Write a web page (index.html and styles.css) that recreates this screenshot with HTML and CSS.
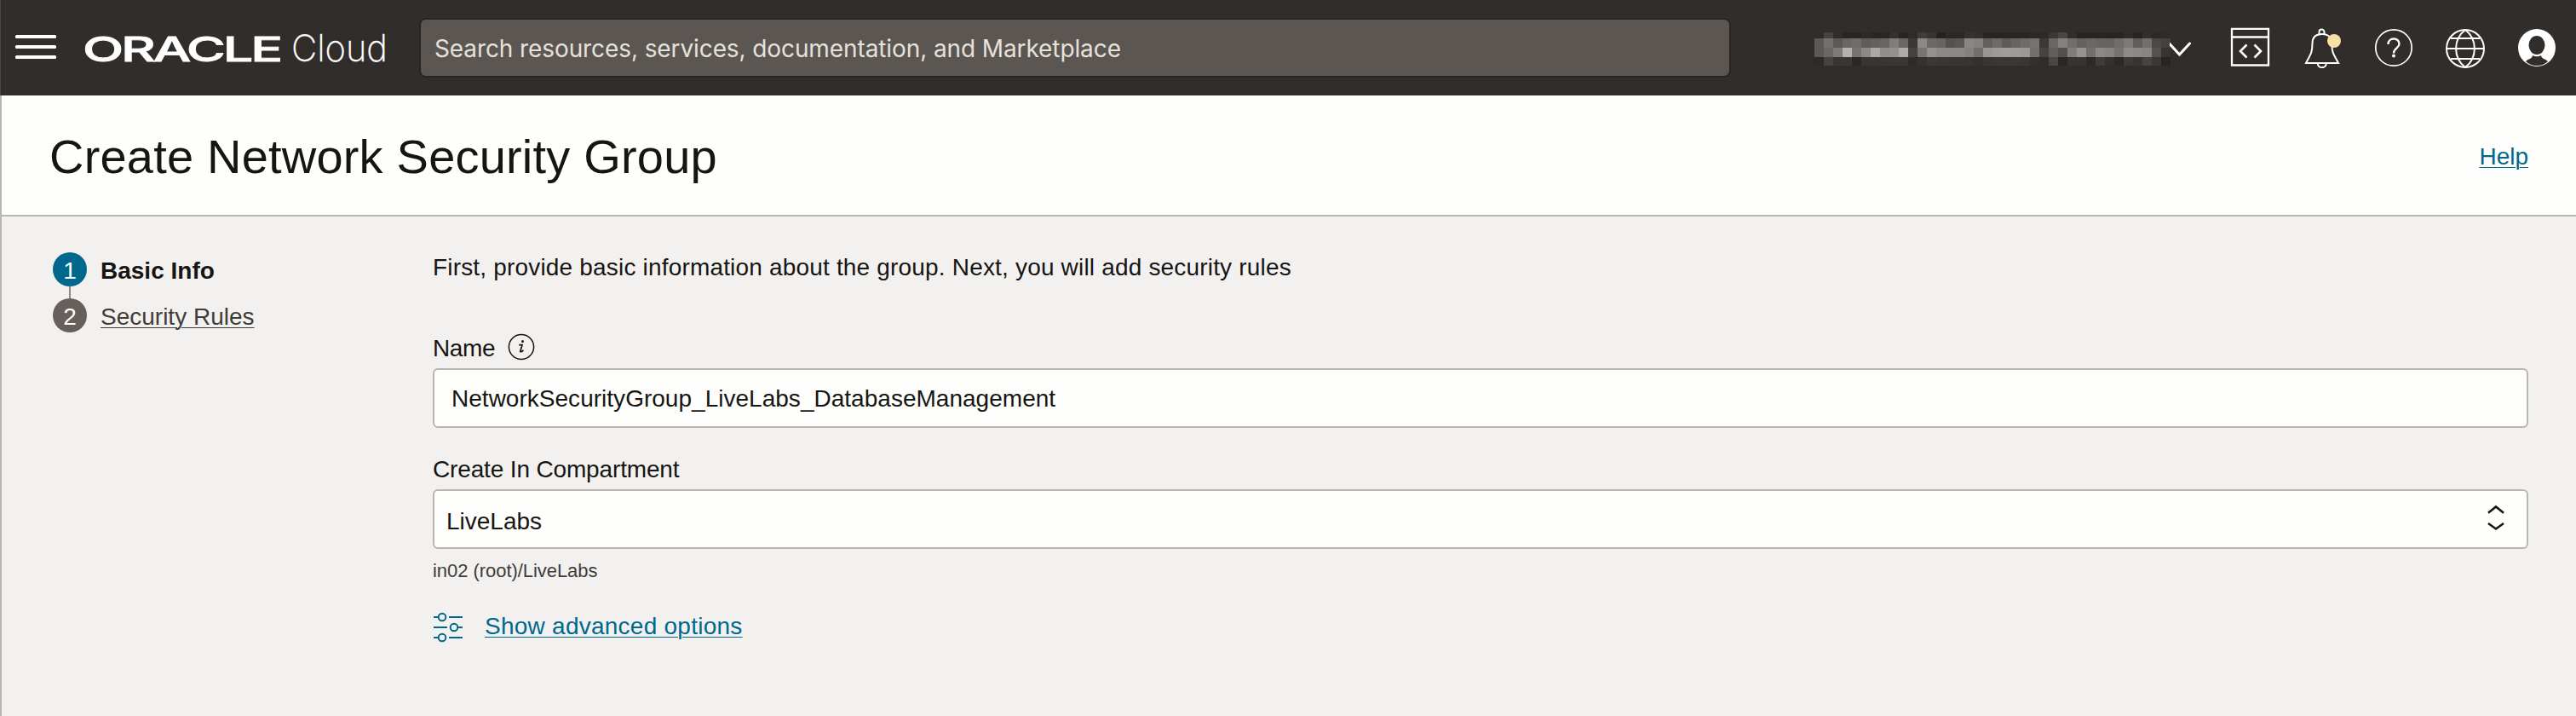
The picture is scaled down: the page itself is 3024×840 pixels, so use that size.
FILE: index.html
```html
<!DOCTYPE html>
<html lang="en">
<head>
<meta charset="utf-8">
<title>Create Network Security Group</title>
<link rel="stylesheet" href="styles.css">
</head>
<body>
<header class="topbar">
  <div class="menu"><span></span><span></span><span></span></div>
  <svg class="brand" width="360" height="60" viewBox="0 0 360 60">
    <text class="brand-name" x="-1" y="48.500" textLength="232" lengthAdjust="spacingAndGlyphs">ORACLE</text>
    <text class="brand-product" x="244" y="49" textLength="113" lengthAdjust="spacingAndGlyphs">Cloud</text>
  </svg>
  <div class="search">Search resources, services, documentation, and Marketplace</div>
  <div class="region">
    <svg id="region-mask" class="region-mask" width="424" height="39" shape-rendering="crispEdges"></svg>
    <svg class="chevron" width="26" height="20" viewBox="0 0 26 20" fill="none" stroke="#fff" stroke-width="3"><path d="M0 4.500 11.500 17 23.500 4" stroke-linecap="round"/></svg>
  </div>
  <nav class="tools">
    <svg viewBox="0 0 48 48" fill="none" stroke="#fff"><path d="M2 1.800H45V44.500H2ZM2 11.500H45" stroke-width="2.300"/><path d="M19.500 20.500 12 28 19.500 35.500M28.500 20.500 36 28 28.500 35.500" stroke-width="2.600"/></svg>
    <svg viewBox="0 0 48 48" fill="none" stroke="#fff" stroke-width="2"><path d="M20.500 8V5.500a3 3 0 0 1 6 0V8M5 42H43C39 34 35.500 31 35.500 23V19C35.500 12 31 8 23.700 8S12.500 12 12.500 19C12.500 31 9.500 33 5 42ZM18.800 42.500c0 6.200 10 6.200 10 0"/><circle cx="38" cy="16" r="8" fill="#f9dfa3" stroke="none"/></svg>
    <svg viewBox="0 0 48 48" fill="none" stroke="#fff"><circle cx="24" cy="24" r="21.200" stroke-width="1.700"/><path d="M17.500 20C17.500 11.500 30.500 11.500 30.500 19.500C30.500 24.500 24 24.500 24 30.500" stroke-width="2.400"/><circle cx="24" cy="33.500" r="2" fill="#fff" stroke="none"/></svg>
    <svg viewBox="0 0 48 48" fill="none" stroke="#fff" stroke-width="2"><circle cx="24" cy="25" r="22"/><path d="M7 13H41M2 25H46M7 37H41M24 3C9.500 14 9.500 36 24 47M24 3C38.500 14 38.500 36 24 47"/></svg>
    <svg viewBox="0 0 48 48"><circle cx="24" cy="24" r="22" fill="#fff"/><path d="M11 40C14 36.500 18.500 37.500 19 33Q24 35.500 29 33C29.500 37.500 34 36.500 37 40Q32 45 24 45T11 40Z" fill="#312d2a"/><ellipse cx="24" cy="21" rx="9.500" ry="11" fill="#312d2a"/></svg>
  </nav>
</header>

<section class="titlebar">
  <h1>Create Network Security Group</h1>
  <a class="link help">Help</a>
</section>

<main class="page">
  <ol class="steps">
    <li class="step current"><span class="num">1</span><span class="step-label">Basic Info</span></li>
    <li class="step"><span class="num">2</span><span class="step-label">Security Rules</span></li>
  </ol>
  <form class="form">
    <p class="intro">First, provide basic information about the group. Next, you will add security rules</p>
    <div class="label name-label"><span>Name</span>
      <svg width="32" height="32" viewBox="0 0 32 32" fill="none" stroke="#161513"><circle cx="16" cy="16" r="14.600" stroke-width="1.500"/><path d="M13.300 13.600H17L14.700 21.500Q15.700 22.500 18.500 19.800" stroke-width="1.700"/><circle cx="17.500" cy="9.600" r="1.500" fill="#161513" stroke="none"/></svg>
    </div>
    <div class="field name-field">NetworkSecurityGroup_LiveLabs_DatabaseManagement</div>
    <div class="label compartment-label">Create In Compartment</div>
    <div class="field select"><span>LiveLabs</span>
      <svg width="20" height="32" viewBox="0 0 20 32" fill="none" stroke="#161513" stroke-width="2.600"><path d="M1 9.800 10 2.500 19 9.800M1 22 10 28.500 19 22"/></svg>
    </div>
    <div class="hint">in02 (root)/LiveLabs</div>
    <div class="advanced">
      <svg width="36" height="36" viewBox="0 0 36 36" fill="none" stroke="#00688c" stroke-width="2"><path d="M1 6H6M19 6H35M1 18H17M30 18H35M1 30H6M19 30H35"/><circle cx="11" cy="6" r="4.300"/><circle cx="25" cy="18" r="4.300"/><circle cx="11" cy="30" r="4.300"/></svg>
      <a class="link">Show advanced options</a>
    </div>
  </form>
</main>
<script src="mask.js"></script>
</body>
</html>
```

FILE: mask.js
```js
// Pixelated mask over the region name: rows of grey levels, one per 11px column.
const rows = [
  [0, 7, "2d 43 2d 26 26 2b 26 28 32 26 2c 3d 35 22 29 29 33 30 26 26 26 26 26 2a 2b 38 47 2e 25 25 25 25 25 2d 25 30 2a 2c"],
  [7, 11, "59 70 59 67 6d 5c 61 66 7e 67 38 89 6a 65 52 57 87 81 60 6b 5c 65 6c 73 39 67 81 6f 62 69 65 64 6e 7b 5e 70 49 42"],
  [18, 11, "59 67 7b b2 73 8a a8 8e 91 ab 42 76 92 8a 89 89 82 6f 96 9b 9d 9c 99 70 44 5f 50 7e 94 70 89 84 74 8c 89 85 52 35"],
  [29, 10, "2b 44 36 37 28 35 35 36 37 37 2c 32 39 37 36 36 35 30 36 38 38 38 37 30 2d 47 28 34 34 2a 3c 31 29 3a 35 44 38 25"]
];
const mask = document.getElementById("region-mask");
const ns = "http://www.w3.org/2000/svg";
for (const [y, height, levels] of rows) {
  levels.split(" ").forEach((hex, column) => {
    const v = parseInt(hex, 16);
    const rect = document.createElementNS(ns, "rect");
    rect.setAttribute("x", 5 + column * 11);
    rect.setAttribute("y", y);
    rect.setAttribute("width", 11);
    rect.setAttribute("height", height);
    rect.setAttribute("fill", `rgb(${v + 2},${v},${v - 2})`);
    mask.append(rect);
  });
}
```

FILE: styles.css
```css
* { box-sizing: border-box; }
body {
  margin: 0;
  height: 840px;
  overflow: hidden;
  background: #f3f1f0;
  color: #161513;
  font: 28px/33px "Liberation Sans", Arial, sans-serif;
}
h1, p, ol { margin: 0; padding: 0; }

.topbar {
  display: flex;
  align-items: center;
  height: 112px;
  padding: 0 22px 0 17px;
  background: #312d2a;
  border-left: 1px solid #4a4643;
}
.menu { display: flex; flex-direction: column; gap: 8px; width: 48px; margin-top: -2px; }
.menu span { height: 4px; border-radius: 1.5px; background: #fff; }
.brand { margin-left: 32px; margin-top: -6px; overflow: visible; }
.brand text { fill: #fff; }
.brand-name { font: 500 40px Inter, sans-serif; letter-spacing: -2px; stroke: #fff; stroke-width: 0.8px; }
.brand-product { font: 200 43px Inter, sans-serif; stroke: #fff; stroke-width: 0.3px; }
.search {
  width: 1540px;
  height: 70px;
  margin-left: 34px;
  padding: 18px 16px;
  border: 2px solid #282420;
  border-radius: 8px;
  background: #5b5652;
  color: #e5e1dc;
  font: 28px/32px Inter, sans-serif;
  letter-spacing: -0.1px;
}
.region { display: flex; align-items: center; margin-left: 93px; }
.region-mask { margin-top: 2px; }
.chevron { margin-top: 2px; margin-left: -2px; }
.tools { display: flex; gap: 36px; margin-left: auto; }
.tools svg { width: 48px; height: 48px; }

.titlebar {
  display: flex;
  justify-content: space-between;
  height: 142px;
  padding: 40px 56px 0 56px;
  border-left: 2px solid #bbb5b1;
  border-bottom: 2px solid #bbb5b1;
  background: #fefefc;
}
h1 { font-size: 56px; line-height: 64px; font-weight: 400; letter-spacing: 0.2px; }
.link {
  color: #00688c;
  text-decoration: underline;
  text-decoration-thickness: 1px;
  text-underline-offset: 3px;
  letter-spacing: 0.25px;
}
.help { margin-top: 15px; letter-spacing: 0; }

.page { display: flex; height: 586px; border-left: 2px solid #bbb5b1; }
.steps { width: 446px; margin-top: 42px; margin-left: 60px; list-style: none; }
.step { display: flex; gap: 16px; height: 54px; color: #403c38; }
.step-label { margin-top: 5px; text-decoration: underline; text-decoration-thickness: 1px; text-underline-offset: 3px; }
.num { width: 40px; height: 40px; padding-top: 5px; border-radius: 50%; background: #665f5b; color: #fff; text-align: center; }
.current { background: linear-gradient(#8f8a86, #8f8a86) 19px 40px / 2px 14px no-repeat; color: #161513; font-weight: 700; }
.current .num { background: #00688c; font-weight: 400; }
.current .step-label { text-decoration: none; }

.form { width: 2460px; margin-top: 43px; }
.intro { height: 32px; letter-spacing: 0.18px; }
.label { height: 32px; }
.name-label { display: flex; gap: 15px; margin-top: 63px; letter-spacing: -0.4px; }
.name-label svg { margin-top: -1px; }
.field {
  height: 70px;
  border: 2px solid #bbb5b1;
  border-radius: 6px;
  background: #fefefc;
}
.name-field { margin-top: 8px; padding: 17px 20px; letter-spacing: 0.02px; }
.compartment-label { margin-top: 32px; letter-spacing: -0.15px; }
.select { display: flex; justify-content: space-between; margin-top: 8px; padding: 19px 26px 0 14px; }
.select svg { margin-top: -3px; }
.hint { margin-top: 12px; font-size: 22px; line-height: 26px; color: #403c38; padding-top: 1px; letter-spacing: -0.05px; }
.advanced { display: flex; gap: 25px; margin-top: 35px; }
```
